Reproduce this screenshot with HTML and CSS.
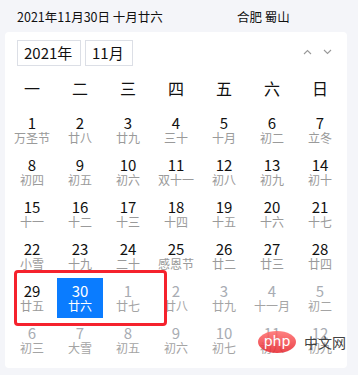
FILE: index.html
```html
<!DOCTYPE html>
<html lang="zh-CN">
<head>
  <meta charset="UTF-8" />
  <title>日历</title>
  <link rel="stylesheet" href="styles.css">
</head>
<body>
  <div class="topbar">
    <span class="today">2021年11月30日 十月廿六</span>
    <span class="place">合肥 蜀山</span>
  </div>

  <div class="calendar">
    <div class="toolbar">
      <div class="pick year">2021年</div>
      <div class="pick month">11月</div>
      <div class="arrows">
        <svg width="9" height="6" viewBox="0 0 9 6"><path d="M1 5 L4.5 1.5 L8 5" fill="none" stroke="#999" stroke-width="1.1"/></svg>
        <svg width="9" height="6" viewBox="0 0 9 6"><path d="M1 1 L4.5 4.5 L8 1" fill="none" stroke="#999" stroke-width="1.1"/></svg>
      </div>
    </div>

    <div class="grid">
      <div class="wd">一</div><div class="wd">二</div><div class="wd">三</div><div class="wd">四</div><div class="wd">五</div><div class="wd">六</div><div class="wd">日</div>

      <div class="day"><b>1</b><i>万圣节</i></div>
      <div class="day"><b>2</b><i>廿八</i></div>
      <div class="day"><b>3</b><i>廿九</i></div>
      <div class="day"><b>4</b><i>三十</i></div>
      <div class="day"><b>5</b><i>十月</i></div>
      <div class="day"><b>6</b><i>初二</i></div>
      <div class="day"><b>7</b><i>立冬</i></div>

      <div class="day"><b>8</b><i>初四</i></div>
      <div class="day"><b>9</b><i>初五</i></div>
      <div class="day"><b>10</b><i>初六</i></div>
      <div class="day"><b>11</b><i>双十一</i></div>
      <div class="day"><b>12</b><i>初八</i></div>
      <div class="day"><b>13</b><i>初九</i></div>
      <div class="day"><b>14</b><i>初十</i></div>

      <div class="day"><b>15</b><i>十一</i></div>
      <div class="day"><b>16</b><i>十二</i></div>
      <div class="day"><b>17</b><i>十三</i></div>
      <div class="day"><b>18</b><i>十四</i></div>
      <div class="day"><b>19</b><i>十五</i></div>
      <div class="day"><b>20</b><i>十六</i></div>
      <div class="day"><b>21</b><i>十七</i></div>

      <div class="day"><b>22</b><i>小雪</i></div>
      <div class="day"><b>23</b><i>十九</i></div>
      <div class="day"><b>24</b><i>二十</i></div>
      <div class="day"><b>25</b><i>感恩节</i></div>
      <div class="day"><b>26</b><i>廿二</i></div>
      <div class="day"><b>27</b><i>廿三</i></div>
      <div class="day"><b>28</b><i>廿四</i></div>

      <div class="day"><b>29</b><i>廿五</i></div>
      <div class="day selected"><b>30</b><i>廿六</i></div>
      <div class="day other"><b>1</b><i>廿七</i></div>
      <div class="day other"><b>2</b><i>廿八</i></div>
      <div class="day other"><b>3</b><i>廿九</i></div>
      <div class="day other"><b>4</b><i>十一月</i></div>
      <div class="day other"><b>5</b><i>初二</i></div>

      <div class="day other"><b>6</b><i>初三</i></div>
      <div class="day other"><b>7</b><i>大雪</i></div>
      <div class="day other"><b>8</b><i>初五</i></div>
      <div class="day other"><b>9</b><i>初六</i></div>
      <div class="day other"><b>10</b><i>初七</i></div>
      <div class="day other"><b>11</b><i>初八</i></div>
      <div class="day other"><b>12</b><i>初九</i></div>
    </div>
  </div>

  <div class="mark"></div>

  <div class="watermark">
    <span class="php">php</span>
    <span class="cn">中文网</span>
  </div>
</body>
</html>
```

FILE: styles.css
```css
body {
  margin: 0;
  width: 358px;
  height: 375px;
  background-color: #f4f5f9;
  font-family: "Noto Sans CJK SC", "Noto Sans", sans-serif;
  color: #111;
  position: relative;
  overflow: hidden;
}

.topbar {
  display: grid;
  grid-template-columns: 220px auto;
  height: 32px;
  align-items: center;
  padding-left: 17px;
  font-size: 12.5px;
  color: #111;
}

.calendar {
  margin-left: 5px;
  width: 342px;
  padding: 8px 3px 7px;
  box-sizing: border-box;
  background-color: #fff;
  border-radius: 4px;
}

.toolbar {
  display: flex;
  align-items: center;
  padding-left: 9px;
  height: 26px;
}

.pick {
  height: 26px;
  box-sizing: border-box;
  border: 1px solid #dcdfe6;
  font-size: 15px;
  line-height: 24px;
  padding: 0 6px;
  margin-right: 4px;
}

.year { width: 64px; }
.month { width: 48px; }

.arrows {
  margin-left: auto;
  margin-right: 12px;
  display: flex;
  gap: 11px;
  margin-top: -2px;
}

.grid {
  display: grid;
  grid-template-columns: repeat(7, 48px);
  margin-top: 1px;
}

.wd, .day {
  margin: 1px;
  height: 40px;
  text-align: center;
}

.wd {
  font-size: 16px;
  line-height: 40px;
}

.day b {
  display: block;
  font-weight: normal;
  font-size: 15px;
  line-height: 17px;
  padding-top: 4px;
}

.day i {
  display: block;
  font-style: normal;
  font-size: 12px;
  line-height: 14px;
  color: #9a9a9a;
}

.day.other b { color: #a8acb3; }
.day.other i { color: #a4a4a4; }

.day.selected {
  background-color: #0a7cff;
  color: #fff;
}

.day.selected i { color: #fff; }

.mark {
  position: absolute;
  left: 14px;
  top: 270px;
  width: 153px;
  height: 56px;
  box-sizing: border-box;
  border: 3px solid #f5222d;
  border-radius: 4px;
}

.watermark {
  position: absolute;
  left: 258px;
  top: 331px;
  display: flex;
  align-items: center;
  gap: 8px;
  opacity: 0.85;
}

.php {
  width: 38px;
  height: 22px;
  border-radius: 50%;
  background: linear-gradient(#ff6b6b, #e8242c);
  color: #fff;
  font-family: "DejaVu Sans", sans-serif;
  font-size: 14px;
  line-height: 21px;
  text-align: center;
}

.cn {
  font-size: 14px;
  color: #222;
}
```
